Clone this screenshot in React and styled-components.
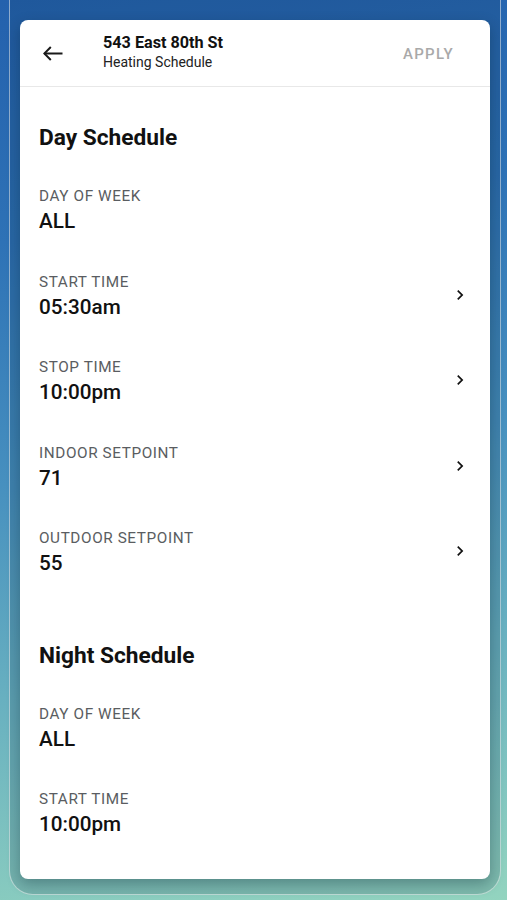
import React from "react";
import styled, { createGlobalStyle } from "styled-components";

const GlobalStyle = createGlobalStyle`
  html, body {
    margin: 0;
    padding: 0;
  }
  body {
    font-family: Roboto, "Noto Sans", "Liberation Sans", sans-serif;
    color: #111;
  }
`;

const Page = styled.div`
  height: 900px;
  box-sizing: border-box;
  padding: 0 6px 5px 9px;
  overflow: hidden;
  background: linear-gradient(172deg, #2461ad 0%, #2e72b6 25%, #4790bf 50%, #68b0c0 72%, #93d4bf 100%);
`;

const Frame = styled.div`
  height: 100%;
  box-sizing: border-box;
  padding: 20px 10px 15px 10px;
  border: 1px solid rgba(255, 255, 255, 0.5);
  border-top: none;
  border-radius: 0 0 24px 24px;
  background: rgba(10, 35, 60, 0.14);
`;

const Card = styled.div`
  height: 100%;
  background: #fff;
  border-radius: 8px;
  overflow: hidden;
  display: flex;
  flex-direction: column;
  box-shadow: 0 5px 14px rgba(0, 30, 40, 0.3);
`;

const Header = styled.header`
  height: 66px;
  flex-shrink: 0;
  display: flex;
  align-items: center;
  padding: 0 36px 0 23px;
  border-bottom: 1px solid #e8e8e8;
`;

const BackButton = styled.button`
  border: none;
  background: none;
  padding: 0;
  width: 20px;
  height: 20px;
  display: flex;
  align-items: center;
  color: #1a1a1a;
  margin-right: 40px;
`;

const TitleBlock = styled.div`
  flex: 1;
  display: flex;
  flex-direction: column;
  margin-top: -1px;
`;

const Title = styled.div`
  font-size: 16.2px;
  font-weight: 700;
  line-height: 20px;
`;

const Subtitle = styled.div`
  font-size: 14px;
  line-height: 19px;
  color: #222;
`;

const ApplyButton = styled.button`
  border: none;
  background: none;
  padding: 0;
  margin-top: 1px;
  font-family: inherit;
  font-size: 15px;
  font-weight: 500;
  letter-spacing: 1.3px;
  color: #a9a9a9;
`;

const Body = styled.div`
  flex: 1;
  overflow: hidden;
  padding: 0 20px 0 19px;
`;

const Section = styled.section`
  padding-top: ${(p) => p.$top}px;
`;

const SectionTitle = styled.h2`
  margin: 0 0 34px;
  font-size: 22.7px;
  font-weight: 700;
  line-height: 28px;
`;

const Row = styled.div`
  display: flex;
  align-items: center;
  height: 48px;
  margin-bottom: 37.5px;
`;

const RowText = styled.div`
  flex: 1;
  display: flex;
  flex-direction: column;
  gap: 2px;
`;

const Label = styled.div`
  font-size: 15.3px;
  line-height: 20px;
  letter-spacing: 0.6px;
  color: #5a5d61;
  text-transform: uppercase;
`;

const Value = styled.div`
  font-size: 20.7px;
  font-weight: 500;
  line-height: 26px;
  color: #111;
`;

const Chevron = styled.svg`
  width: 20px;
  height: 20px;
  flex-shrink: 0;
  margin-top: -2px;
`;

const ArrowBack = () => (
  <svg width="20" height="15" viewBox="0 0 20 15" fill="none">
    <path d="M1.2 7.5H19.5" stroke="currentColor" strokeWidth="2" />
    <path d="M7.8 1L1.3 7.5L7.8 14" stroke="currentColor" strokeWidth="2" />
  </svg>
);

const day = [
  { label: "Day of week", value: "ALL" },
  { label: "Start time", value: "05:30am", link: true },
  { label: "Stop time", value: "10:00pm", link: true },
  { label: "Indoor setpoint", value: "71", link: true },
  { label: "Outdoor setpoint", value: "55", link: true },
];

const night = [
  { label: "Day of week", value: "ALL" },
  { label: "Start time", value: "10:00pm" },
];

const Field = ({ label, value, link }) => (
  <Row>
    <RowText>
      <Label>{label}</Label>
      <Value>{value}</Value>
    </RowText>
    {link && (
      <Chevron viewBox="0 0 24 24">
        <path fill="#111" d="M10 6 8.59 7.41 13.17 12l-4.58 4.59L10 18l6-6z" />
      </Chevron>
    )}
  </Row>
);

export default function App() {
  return (
    <>
      <GlobalStyle />
      <Page>
        <Frame>
          <Card>
            <Header>
              <BackButton>
                <ArrowBack />
              </BackButton>
              <TitleBlock>
                <Title>543 East 80th St</Title>
                <Subtitle>Heating Schedule</Subtitle>
              </TitleBlock>
              <ApplyButton>APPLY</ApplyButton>
            </Header>
            <Body>
              <Section $top={37}>
                <SectionTitle>Day Schedule</SectionTitle>
                {day.map((f, i) => (
                  <Field key={i} {...f} />
                ))}
              </Section>
              <Section $top={28}>
                <SectionTitle>Night Schedule</SectionTitle>
                {night.map((f, i) => (
                  <Field key={i} {...f} />
                ))}
              </Section>
            </Body>
          </Card>
        </Frame>
      </Page>
    </>
  );
}
